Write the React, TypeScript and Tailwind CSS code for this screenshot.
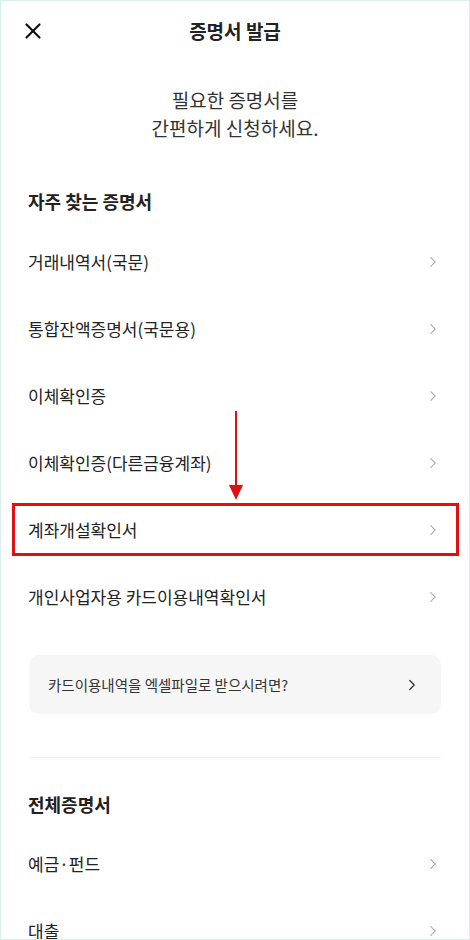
import { X, ChevronRight } from "lucide-react";

const frequent = [
  "거래내역서(국문)",
  "통합잔액증명서(국문용)",
  "이체확인증",
  "이체확인증(다른금융계좌)",
  "계좌개설확인서",
  "개인사업자용 카드이용내역확인서",
];

const all = ["예금·펀드", "대출"];

function Row({ label, highlight }: { label: string; highlight?: boolean }) {
  return (
    <div className="relative flex h-[67px] items-center justify-between pl-[27px] pr-[27px]">
      <span className="text-[17px] text-[#222]">{label}</span>
      <ChevronRight className="h-[18px] w-[18px] text-[#9a9a9a]" strokeWidth={1.4} />
      {highlight && (
        <div className="pointer-events-none absolute left-[11px] right-[10px] top-[7px] bottom-[7px] border-[3px] border-[#e01010]" />
      )}
    </div>
  );
}

export default function App() {
  return (
    <div
      className="relative h-[940px] w-[470px] overflow-hidden border border-[#d6f1ec] bg-white"
      style={{ fontFamily: '"Noto Sans CJK KR", "Noto Sans", sans-serif' }}
    >
      {/* header */}
      <div className="relative flex h-[60px] items-center justify-center">
        <X className="absolute left-[19px] top-[17px] h-[26px] w-[26px] text-[#111]" strokeWidth={2} />
        <h1 className="text-[19px] font-bold text-[#222]">증명서 발급</h1>
      </div>

      <p className="mt-[25px] text-center text-[19px] leading-[28px] text-[#333]">
        필요한 증명서를
        <br />
        간편하게 신청하세요.
      </p>

      <h2 className="mt-[46px] pl-[27px] text-[18px] font-bold text-[#222]">자주 찾는 증명서</h2>

      <div className="mt-[13px]">
        {frequent.map((label) => (
          <Row key={label} label={label} highlight={label === "계좌개설확인서"} />
        ))}
      </div>

      <div className="mx-[28px] mt-[25px] flex h-[59px] items-center justify-between rounded-[10px] bg-[#f6f6f6] pl-[19px] pr-[20px]">
        <span className="text-[14.5px] text-[#333]">카드이용내역을 엑셀파일로 받으시려면?</span>
        <ChevronRight className="h-[18px] w-[18px] text-[#333]" strokeWidth={1.6} />
      </div>

      <div className="mx-[28px] mt-[43px] h-px bg-[#f0f0f0]" />

      <h2 className="mt-[33px] pl-[27px] text-[18px] font-bold text-[#222]">전체증명서</h2>

      <div className="mt-[12px]">
        {all.map((label) => (
          <Row key={label} label={label} />
        ))}
      </div>

      {/* annotation arrow */}
      <svg className="pointer-events-none absolute left-[226px] top-[410px]" width="18" height="90" viewBox="0 0 18 90">
        <line x1="9" y1="0" x2="9" y2="78" stroke="#e01010" strokeWidth="2" />
        <polygon points="2,74 16,74 9,89" fill="#e01010" />
      </svg>
    </div>
  );
}
